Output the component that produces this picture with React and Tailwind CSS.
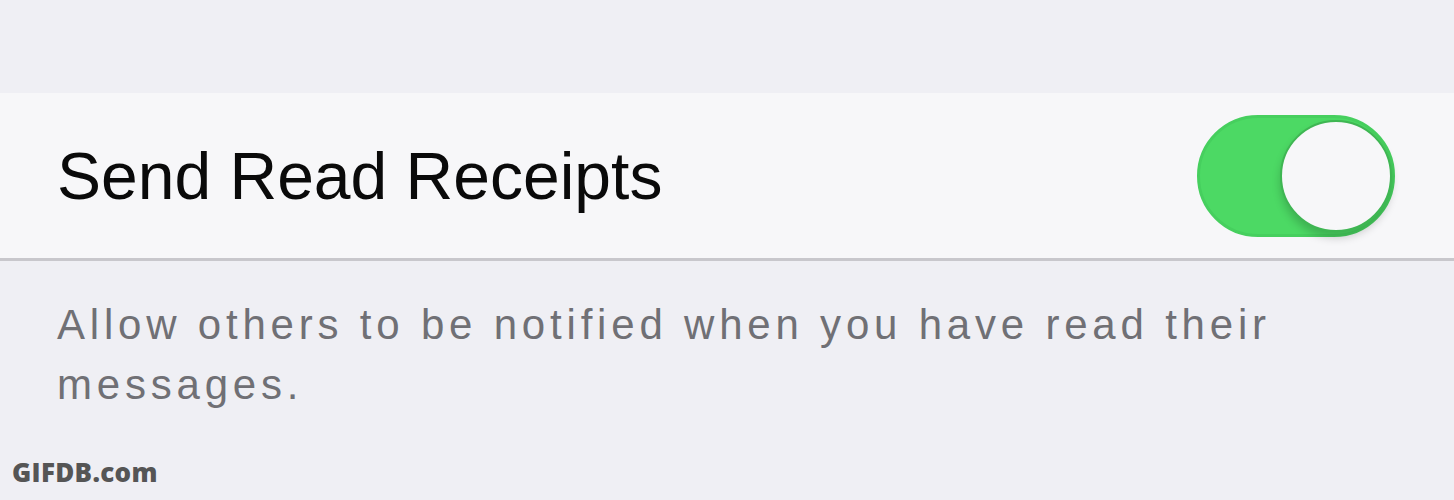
import { useState } from 'react'

function Toggle({ on, onChange }) {
  return (
    <button
      onClick={() => onChange(!on)}
      className={`relative h-[122px] w-[198px] shrink-0 rounded-full border-[3px] transition-colors ${
        on ? 'border-[#46cf5e] bg-[#4cd964]' : 'border-[#e5e5ea] bg-[#f7f7f9]'
      }`}
    >
      <span
        className={`absolute top-[2px] h-[112px] w-[112px] rounded-full border-[2px] border-[#3fb653] bg-[#f7f7f9] shadow-[0_6px_8px_rgba(0,0,0,0.18)] transition-all ${
          on ? 'right-[0px]' : 'left-[0px]'
        }`}
      />
    </button>
  )
}

export default function App() {
  const [readReceipts, setReadReceipts] = useState(true)

  return (
    <div
      className="relative h-[500px] w-[1454px] overflow-hidden bg-[#efeff4]"
      style={{ fontFamily: '"Liberation Sans", Arial, sans-serif' }}
    >
      <div className="h-[93px]" />

      {/* settings cell */}
      <div className="flex h-[168px] items-center justify-between border-b-[3px] border-[#c8c7cc] bg-[#f7f7f9] pl-[57px] pr-[59px]">
        <span className="text-[66px] leading-none text-[#0a0a0a]">Send Read Receipts</span>
        <Toggle on={readReceipts} onChange={setReadReceipts} />
      </div>

      {/* section footer */}
      <p className="w-[1300px] pl-[57px] pt-[34px] text-[42px] leading-[60px] tracking-[4.8px] text-[#707075]">
        Allow others to be notified when you have read their messages.
      </p>

      <div
        className="absolute bottom-[8px] left-[12px] text-[26px] font-black tracking-[0.3px] text-[#555]"
        style={{ fontFamily: '"Open Sans", sans-serif' }}
      >
        GIFDB.com
      </div>
    </div>
  )
}
